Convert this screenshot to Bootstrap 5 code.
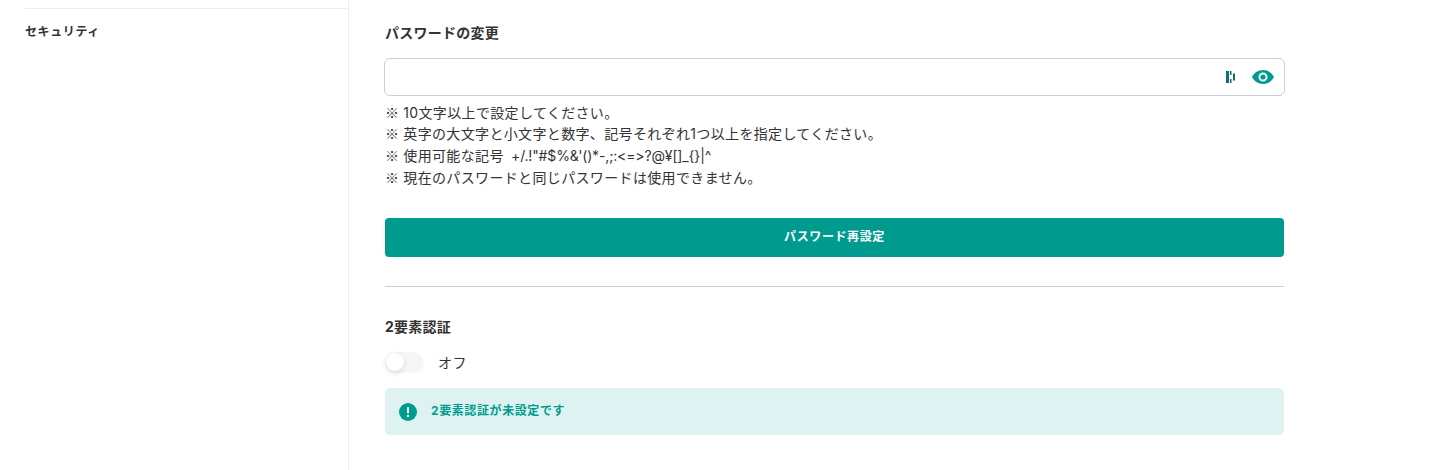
<!DOCTYPE html>
<html lang="ja">
<head>
    <meta charset="UTF-8">
    <meta name="viewport" content="width=device-width, initial-scale=1.0">
    <title>セキュリティ</title>
    <link href="https://cdn.jsdelivr.net/npm/bootstrap@5.3.0/dist/css/bootstrap.min.css" rel="stylesheet">
    <style>
        html, body {
            height: 470px;
            overflow: hidden;
        }

        body {
            font-family: Inter, "Noto Sans CJK JP", sans-serif;
            font-variant-ligatures: none;
            font-feature-settings: "calt" 0;
            color: #333;
            background-color: #fff;
        }

        .page-wrap {
            height: 470px;
        }

        .side-col {
            width: 349px;
            flex: none;
            padding: 8px 0 0 25px;
            border-right: 1px solid #ecedf0;
        }

        .side-item {
            margin-right: 1px;
            border-top: 1px solid #ecedf0;
            padding-top: 14px;
            font-size: 12px;
            line-height: 18px;
            font-weight: 700;
            letter-spacing: 0.6px;
        }

        .main-col {
            width: 899px;
            margin-left: 36px;
            padding-top: 23px;
        }

        .sec-title {
            font-size: 14px;
            line-height: 20px;
            font-weight: 700;
            letter-spacing: 0.25px;
            margin: 0;
        }

        .pw-box {
            height: 38px;
            margin: 15px -1px 0;
            border: 1px solid #cad0d9;
            border-radius: 6px;
            padding-right: 10px;
            gap: 15px;
        }

        .hint-list {
            margin: 5.5px 0 0;
            font-size: 14px;
            line-height: 21.7px;
            letter-spacing: 0.35px;
        }

        .hint-mark {
            font-family: "Noto Sans CJK JP", sans-serif;
            line-height: 1;
            letter-spacing: 0;
        }

        .hint-symbols {
            margin-left: 3px;
            letter-spacing: -0.15px;
        }

        .reset-btn {
            height: 39px;
            margin-top: 29.7px;
            padding: 0 0 2px;
            background-color: #009b8f;
            border: 0;
            border-radius: 4px;
            color: #fff;
            font-size: 12px;
            font-weight: 700;
            letter-spacing: 0.6px;
        }

        .reset-btn:hover {
            background-color: #009b8f;
            color: #fff;
        }

        .split-line {
            margin: 29px 0 30px;
            border: 0;
            border-top: 1px solid #c8cdd8;
            opacity: 1;
        }

        .toggle-row {
            margin-top: 15px;
            gap: 14px;
            font-size: 14px;
            line-height: 20px;
            letter-spacing: 0.6px;
        }

        .toggle-track {
            position: relative;
            width: 39px;
            height: 21px;
            border-radius: 11px;
            background-color: #f5f6f8;
        }

        .toggle-knob {
            position: absolute;
            left: 1px;
            top: 1px;
            width: 18px;
            height: 18px;
            border-radius: 50%;
            background-color: #fff;
            box-shadow: 0 2px 6px rgba(0, 0, 0, 0.12);
        }

        .notice-box {
            height: 47px;
            margin-top: 15px;
            padding-left: 14px;
            gap: 14px;
            background-color: #def3f1;
            border-radius: 5px;
            color: #009b8f;
            font-size: 12px;
            font-weight: 700;
            letter-spacing: 0.6px;
        }

        .notice-text {
            margin-bottom: 2px;
        }
    </style>
</head>
<body>
    <div class="page-wrap d-flex">
        <div class="side-col">
            <div class="side-item">セキュリティ</div>
        </div>
        <div class="main-col">
            <h2 class="sec-title">パスワードの変更</h2>
            <div class="pw-box d-flex align-items-center justify-content-end">
                <svg width="12" height="14" viewBox="0 0 12 14">
                    <rect x="1" y="1" width="3" height="12" fill="#0f6f75"></rect>
                    <rect x="5" y="1" width="1.5" height="4" fill="#0f6f75"></rect>
                    <rect x="5" y="9" width="1.5" height="4" fill="#0f6f75"></rect>
                    <rect x="8" y="3.5" width="2" height="7" fill="#0f6f75"></rect>
                </svg>
                <svg width="22" height="14" viewBox="0 0 22 14">
                    <path d="M11 0C6 0 2 3 0 7c2 4 6 7 11 7s9-3 11-7c-2-4-6-7-11-7zm0 11.5a4.5 4.5 0 1 1 0-9 4.5 4.5 0 0 1 0 9z" fill="#009b8f"></path>
                    <circle cx="11" cy="7" r="2.6" fill="#009b8f"></circle>
                </svg>
            </div>
            <div class="hint-list">
                <div><span class="hint-mark">※</span> 10文字以上で設定してください。</div>
                <div><span class="hint-mark">※</span> 英字の大文字と小文字と数字、記号それぞれ1つ以上を指定してください。</div>
                <div><span class="hint-mark">※</span> 使用可能な記号 <span class="hint-symbols">+/.!"#$%&amp;'()*-,;:&lt;=&gt;?@¥[]_{}|^</span></div>
                <div><span class="hint-mark">※</span> 現在のパスワードと同じパスワードは使用できません。</div>
            </div>
            <button type="button" class="btn reset-btn w-100">パスワード再設定</button>
            <hr class="split-line">
            <h2 class="sec-title">2要素認証</h2>
            <div class="toggle-row d-flex align-items-center">
                <span class="toggle-track"><span class="toggle-knob"></span></span>
                <span>オフ</span>
            </div>
            <div class="notice-box d-flex align-items-center">
                <svg width="18" height="18" viewBox="0 0 18 18">
                    <circle cx="9" cy="9" r="9" fill="#009b8f"></circle>
                    <rect x="8" y="4" width="2" height="6.5" rx="1" fill="#fff"></rect>
                    <circle cx="9" cy="13" r="1.2" fill="#fff"></circle>
                </svg>
                <span class="notice-text">2要素認証が未設定です</span>
            </div>
        </div>
    </div>
    <script src="https://cdn.jsdelivr.net/npm/bootstrap@5.3.0/dist/js/bootstrap.bundle.min.js"></script>
</body>
</html>
